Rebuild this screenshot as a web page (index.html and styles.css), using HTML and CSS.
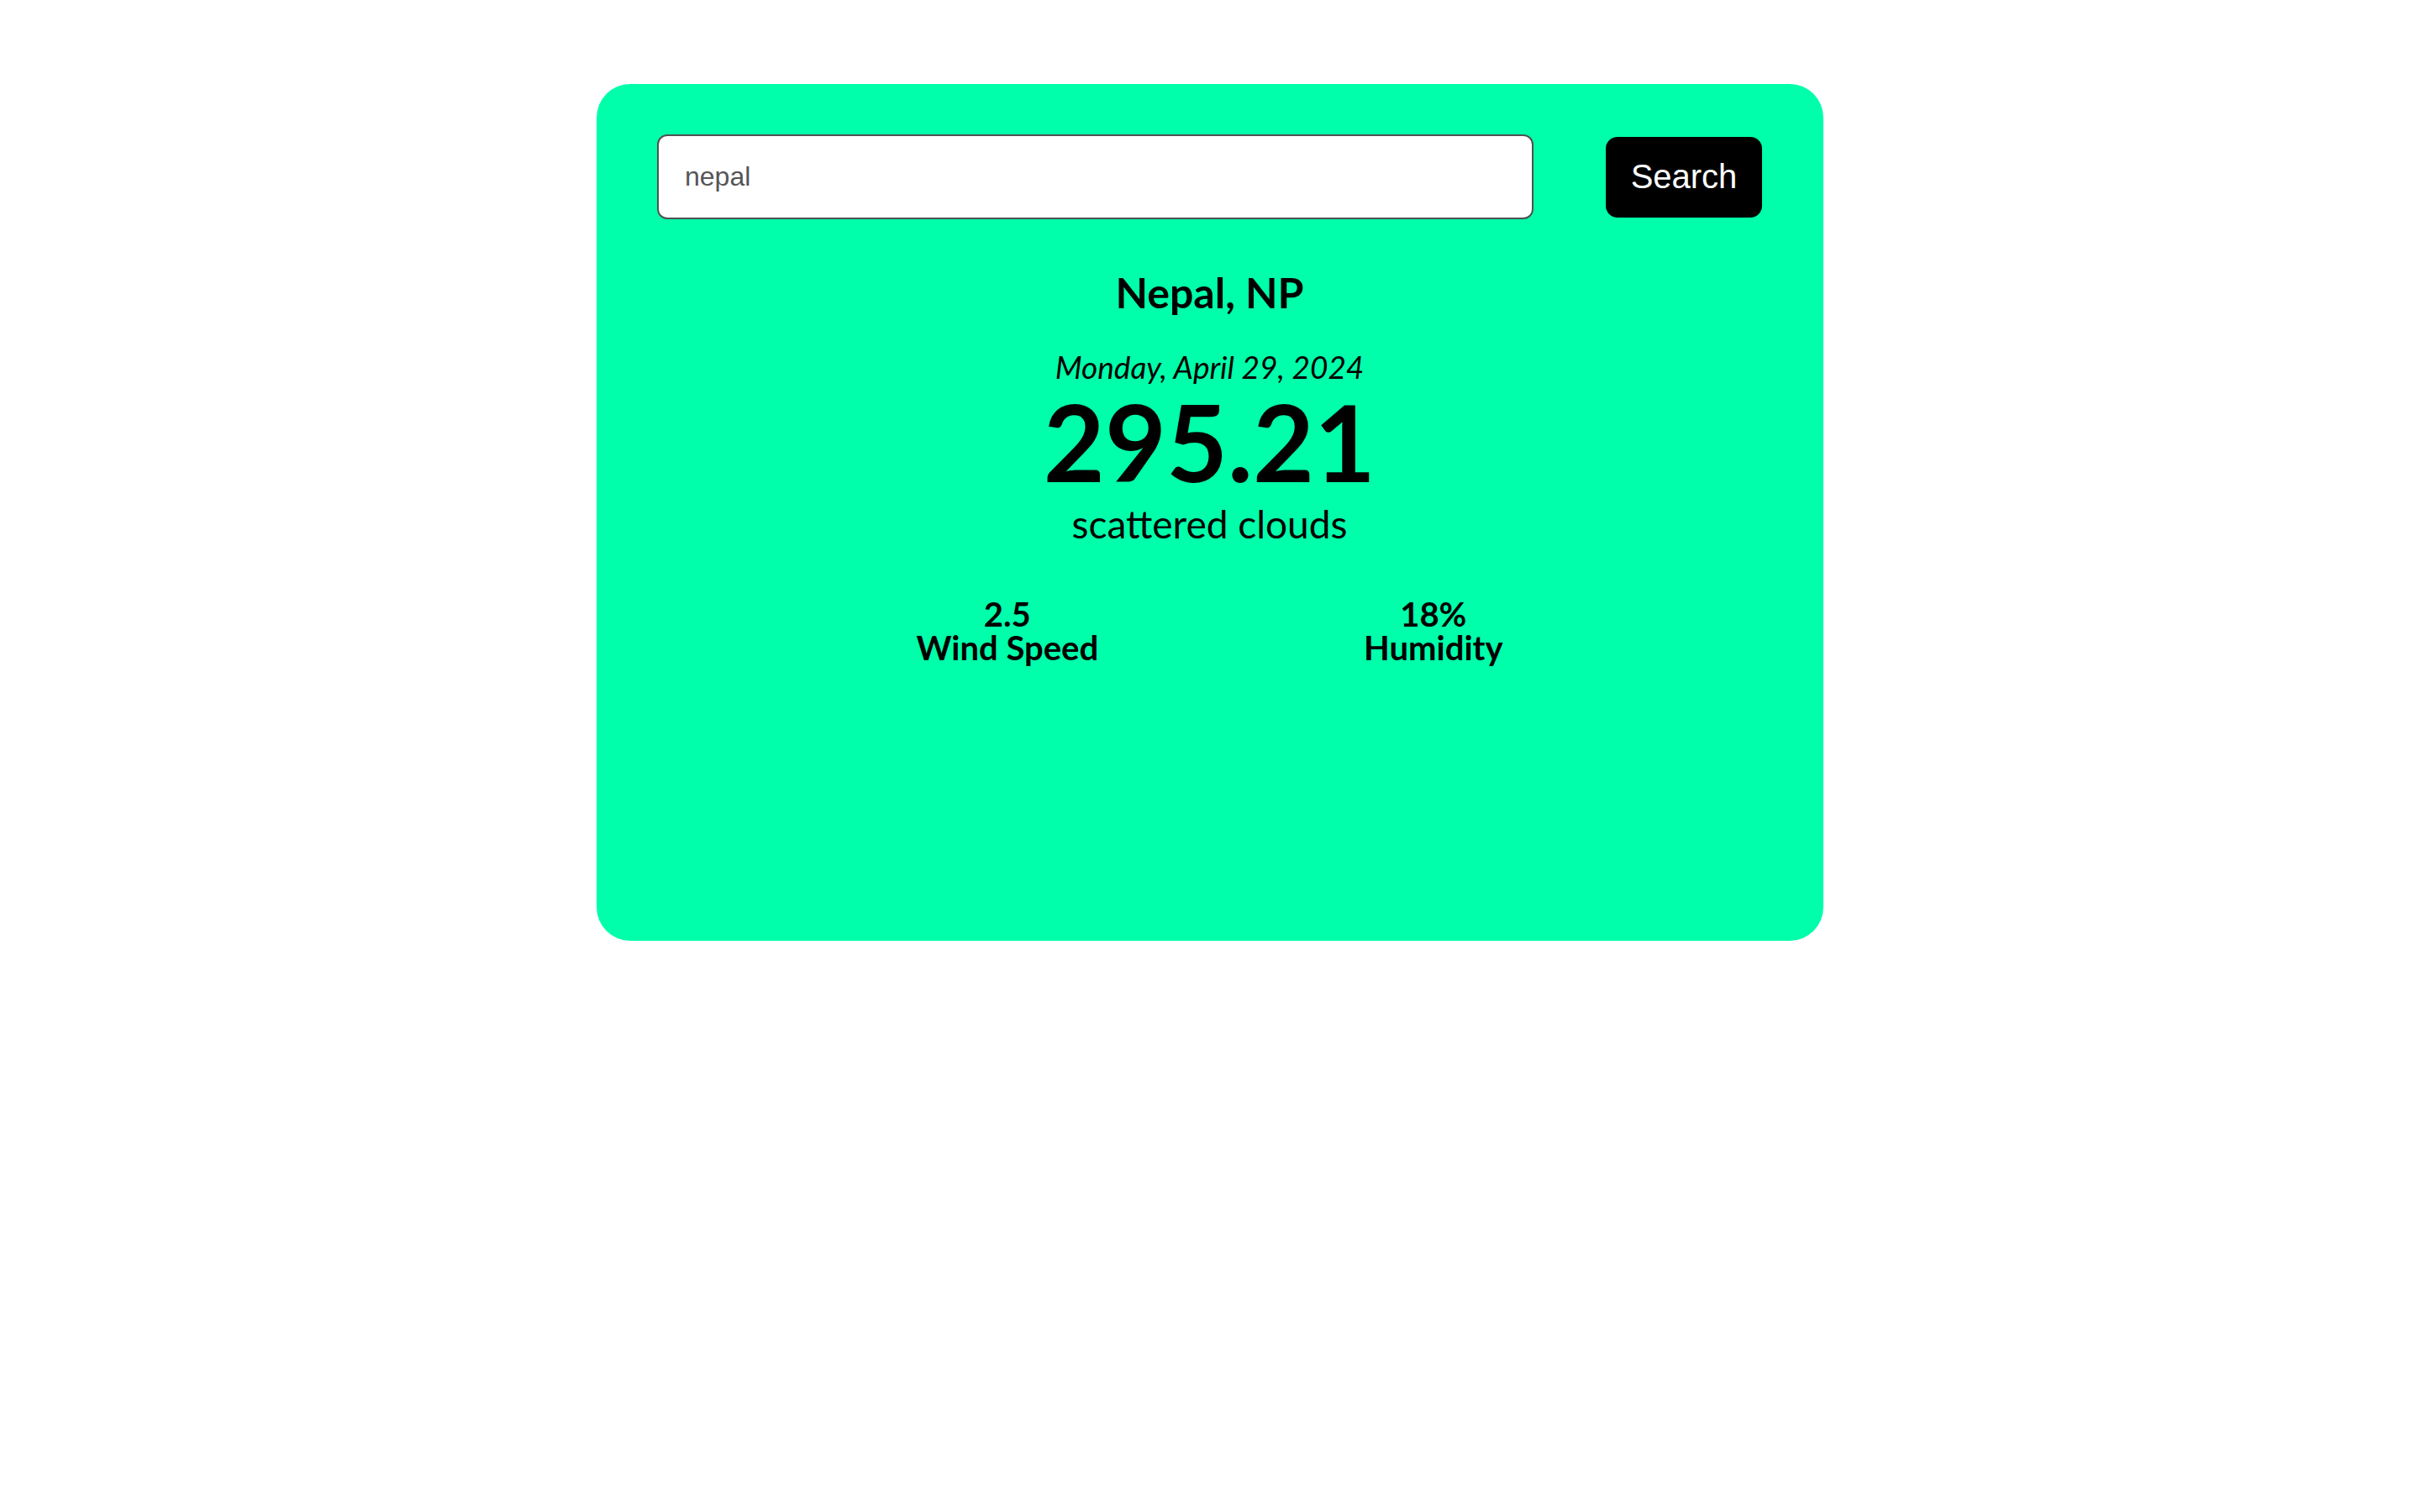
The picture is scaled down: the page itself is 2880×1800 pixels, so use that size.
FILE: index.html
```html
<!DOCTYPE html>
<html lang="en">
<head>
<meta charset="utf-8">
<title>Weather</title>
<link rel="stylesheet" href="styles.css">
</head>
<body>
<main class="page">
  <section class="card">
    <form class="search">
      <input class="search-input" type="text" value="nepal">
      <button class="search-btn" type="button">Search</button>
    </form>
    <div class="weather">
      <h2 class="city">Nepal, NP</h2>
      <p class="date">Monday, April 29, 2024</p>
      <p class="temp">295.21</p>
      <p class="desc">scattered clouds</p>
      <div class="details">
        <div class="detail">
          <div class="detail-value">2.5</div>
          <div class="detail-label">Wind Speed</div>
        </div>
        <div class="detail">
          <div class="detail-value">18%</div>
          <div class="detail-label">Humidity</div>
        </div>
      </div>
    </div>
  </section>
</main>
</body>
</html>
```
FILE: styles.css
```css
html, body {
  margin: 0;
  padding: 0;
  background: #ffffff;
}

.page {
  padding-top: 100px;
  font-family: Lato, "Open Sans", sans-serif;
  color: #000;
}

.card {
  box-sizing: border-box;
  width: 1460px;
  height: 1020px;
  margin: 0 auto;
  padding: 60px 73px 0 72px;
  background: #00ffaa;
  border-radius: 40px;
}

.search {
  display: flex;
  align-items: center;
  justify-content: space-between;
  margin: 0;
}

.search-input {
  box-sizing: border-box;
  width: 1043px;
  height: 101px;
  padding: 0 0 0 31px;
  border: 2px solid #505050;
  border-radius: 12px;
  background: #fff;
  font-family: "Liberation Sans", Arial, sans-serif;
  font-size: 32px;
  color: #555;
  outline: none;
}

.search-btn {
  box-sizing: border-box;
  width: 186px;
  height: 96px;
  padding: 0;
  border: none;
  border-radius: 14px;
  background: #000;
  color: #fff;
  font-family: "Liberation Sans", Arial, sans-serif;
  font-size: 40px;
}

.weather {
  text-align: center;
}

.city {
  margin: 57px 0 0;
  font-size: 50px;
  font-weight: 700;
  line-height: 1.2;
}

.date {
  margin: 37px 0 0;
  font-size: 37px;
  font-style: italic;
  line-height: 1.2;
}

.temp {
  margin: 4px 0 0;
  font-size: 126px;
  font-weight: 700;
  line-height: 1;
}

.desc {
  margin: 7px 0 0;
  font-size: 46px;
  line-height: 1.2;
}

.details {
  display: flex;
  justify-content: space-around;
  width: 1014px;
  margin: 59px auto 0;
}

.detail {
  text-align: center;
  font-size: 40px;
  font-weight: 700;
  line-height: 40px;
}
```
